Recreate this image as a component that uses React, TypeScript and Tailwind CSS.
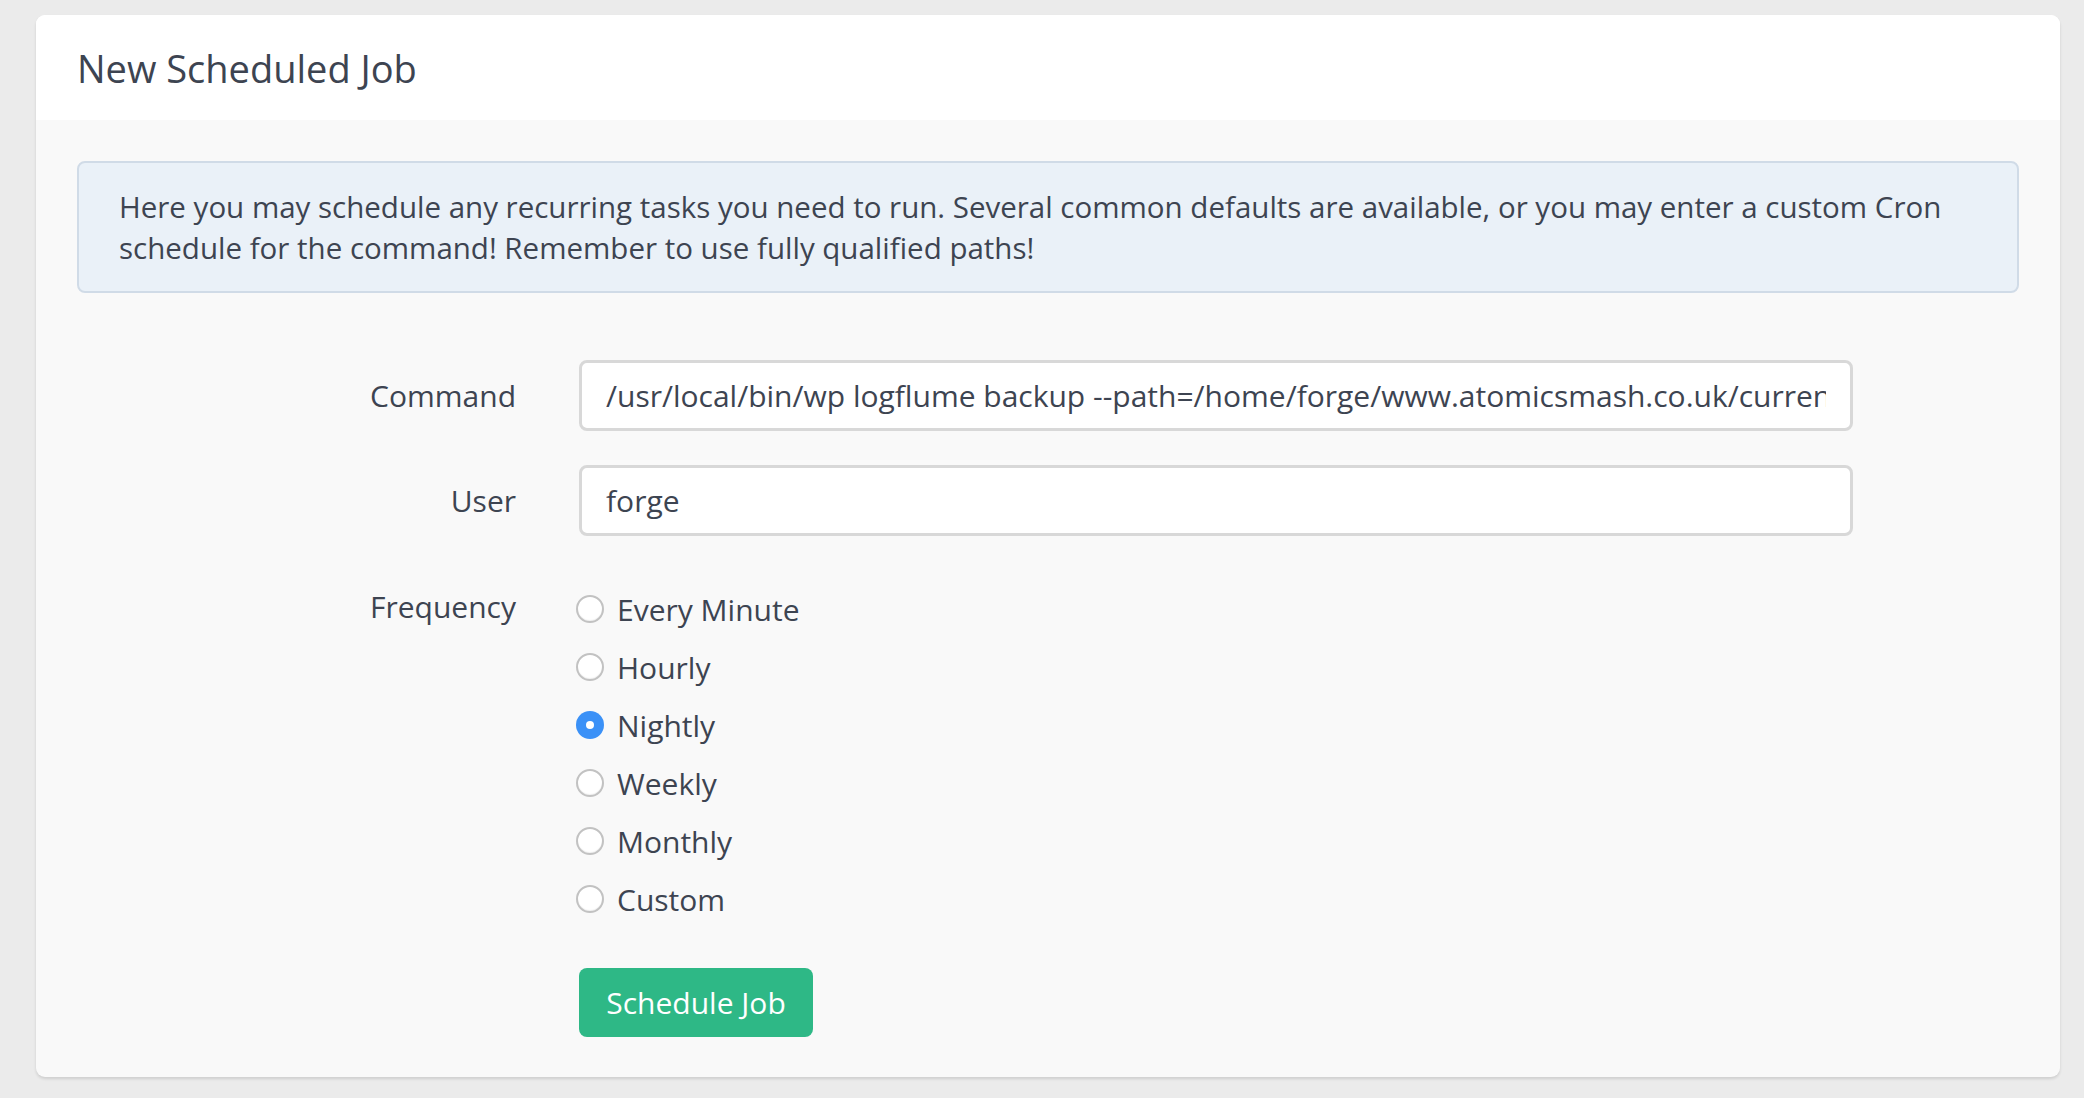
import { useState } from 'react';

const frequencies = ['Every Minute', 'Hourly', 'Nightly', 'Weekly', 'Monthly', 'Custom'];

function Radio({ checked }: { checked: boolean }) {
  if (checked) {
    return (
      <span className="flex h-[28px] w-[28px] shrink-0 items-center justify-center rounded-full bg-[#3b91f7]">
        <span className="h-[8px] w-[8px] rounded-full bg-white" />
      </span>
    );
  }
  return (
    <span className="h-[28px] w-[28px] shrink-0 rounded-full border-[2px] border-[#c2c2c2] bg-white shadow-[inset_0_-1px_1px_rgba(0,0,0,0.06)]" />
  );
}

export default function App() {
  const [frequency, setFrequency] = useState('Nightly');

  return (
    <div
      className="min-h-[1098px] bg-[#ebebeb] pl-[36px] pr-[24px] pt-[15px] text-[#3d4451]"
      style={{ fontFamily: '"Open Sans", "Liberation Sans", sans-serif' }}
    >
      <div className="overflow-hidden rounded-[9px] bg-[#f9f9f9] shadow-[0_2px_3px_rgba(0,0,0,0.12)]">
        {/* Header */}
        <div className="flex h-[105px] items-center bg-white px-[41px]">
          <h1 className="text-[38px] leading-none font-normal">New Scheduled Job</h1>
        </div>

        {/* Body */}
        <div className="px-[41px] pt-[41px] pb-[40px]">
          <div className="rounded-[8px] border-[2px] border-[#d0dbe7] bg-[#eaf1f8] px-[40px] py-[23px] text-[29.5px] leading-[41px]">
            Here you may schedule any recurring tasks you need to run. Several common defaults are available, or you
            may enter a custom Cron schedule for the command! Remember to use fully qualified paths!
          </div>

          <div className="mt-[67px] flex flex-col">
            {/* Command */}
            <div className="flex items-center gap-[63px]">
              <label className="w-[439px] text-right text-[30px]">Command</label>
              <input
                readOnly
                value="/usr/local/bin/wp logflume backup --path=/home/forge/www.atomicsmash.co.uk/current/wp"
                className="h-[71px] w-[1274px] rounded-[8px] border-[3px] border-[#d8d8d8] bg-white px-[24px] text-[30px] text-[#3d4451] outline-none"
              />
            </div>

            {/* User */}
            <div className="mt-[34px] flex items-center gap-[63px]">
              <label className="w-[439px] text-right text-[30px]">User</label>
              <input
                readOnly
                value="forge"
                className="h-[71px] w-[1274px] rounded-[8px] border-[3px] border-[#d8d8d8] bg-white px-[24px] text-[30px] text-[#3d4451] outline-none"
              />
            </div>

            {/* Frequency */}
            <div className="mt-[44px] flex gap-[60px]">
              <div className="flex h-[58px] w-[439px] items-center justify-end pb-[6px] text-[30px]">Frequency</div>
              <div className="flex flex-col">
                {frequencies.map((f) => (
                  <button
                    key={f}
                    onClick={() => setFrequency(f)}
                    className="flex h-[58px] items-center gap-[13px] text-left text-[30px]"
                  >
                    <Radio checked={frequency === f} />
                    <span>{f}</span>
                  </button>
                ))}
              </div>
            </div>

            {/* Submit */}
            <div className="mt-[40px] flex gap-[63px]">
              <div className="w-[439px]" />
              <button className="h-[69px] w-[234px] rounded-[8px] bg-[#2eb886] text-[30px] text-white">
                Schedule Job
              </button>
            </div>
          </div>
        </div>
      </div>
    </div>
  );
}
